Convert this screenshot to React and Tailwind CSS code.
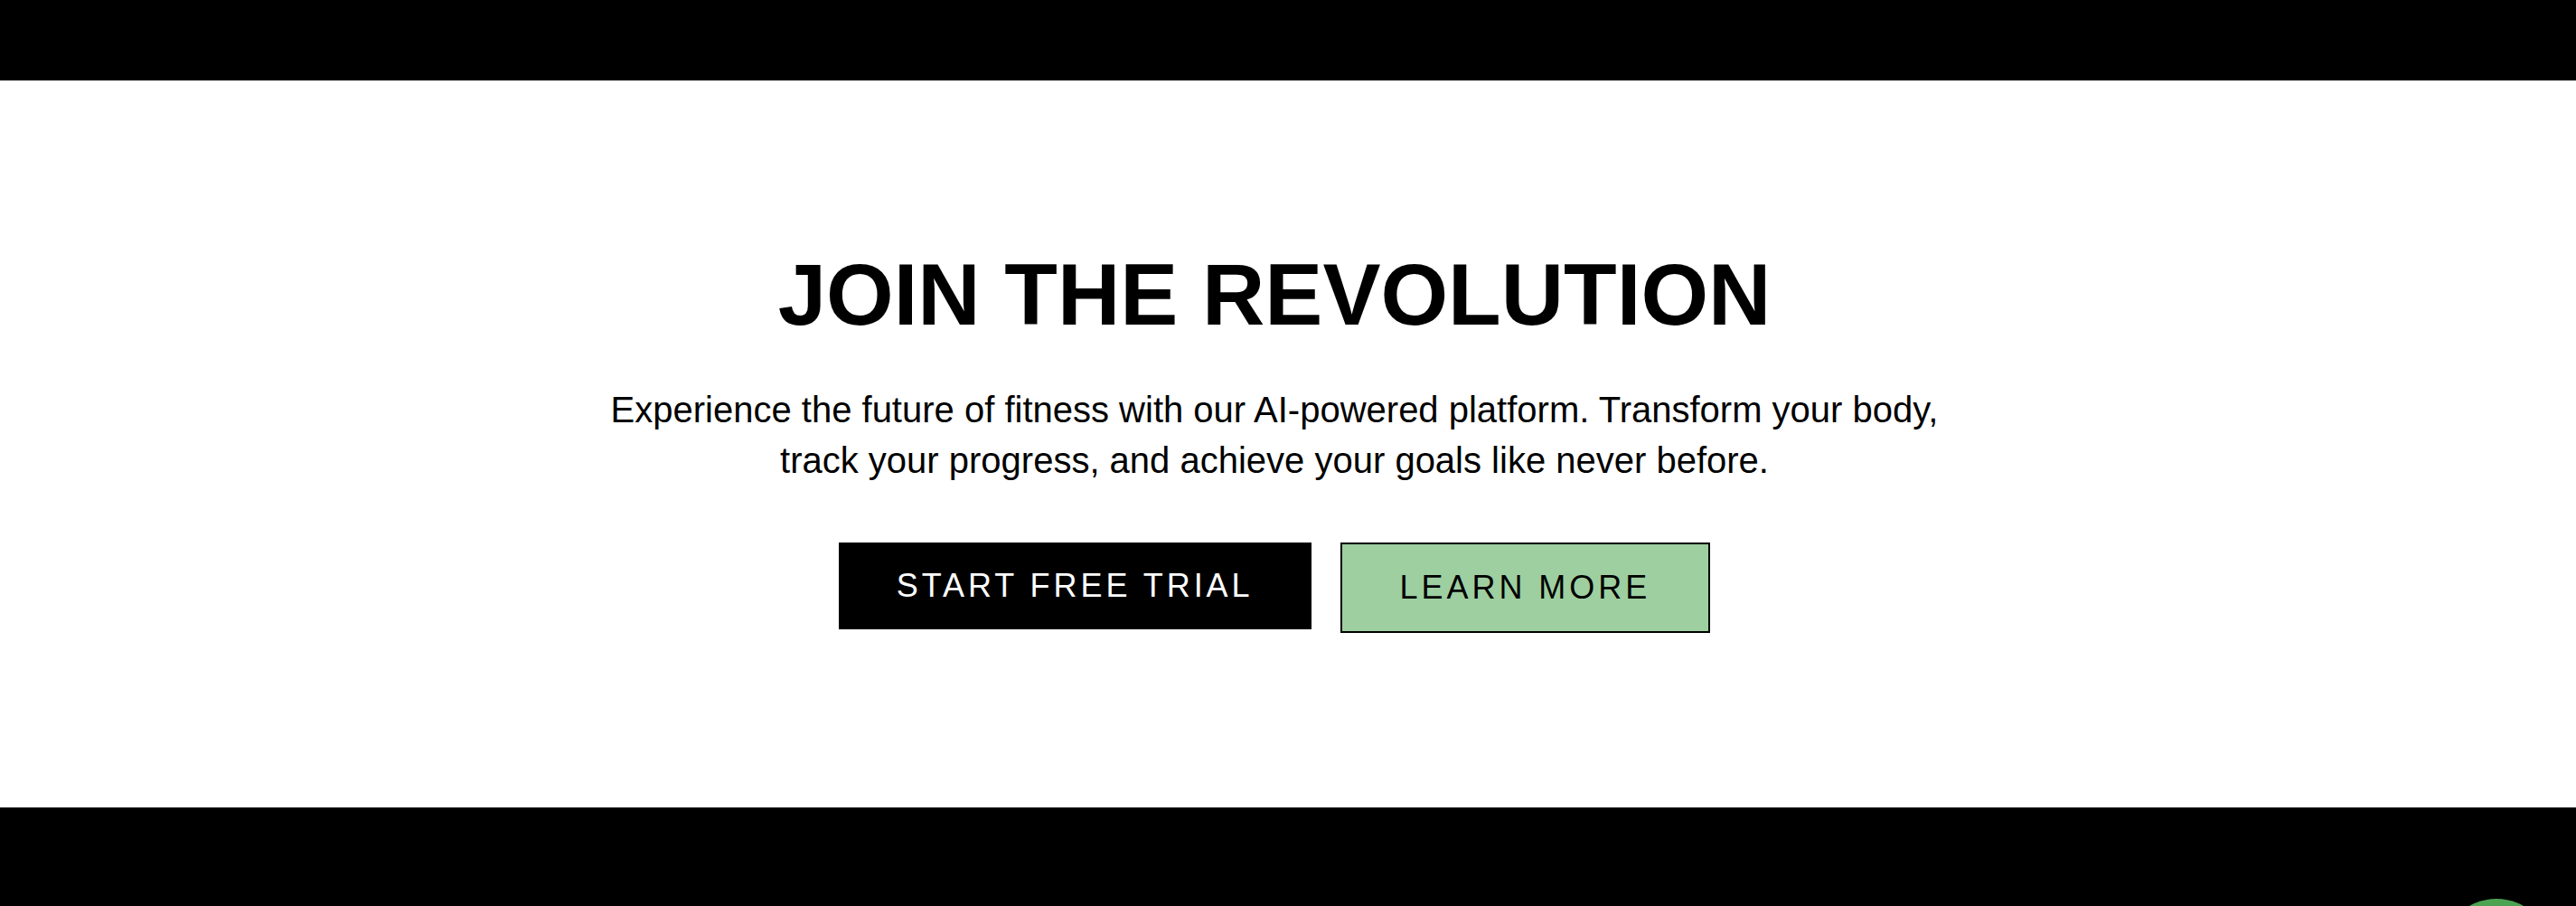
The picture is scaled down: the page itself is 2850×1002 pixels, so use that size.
export default function App() {
  return (
    <div className="w-full h-[1002px] overflow-hidden bg-white font-['Liberation_Sans',Arial,sans-serif] text-black">
      <header className="h-[89px] bg-black" />
      <section className="h-[804px] flex flex-col items-center pt-[189px] pr-[30px]">
        <h1 className="text-[96px] leading-none font-bold">JOIN THE REVOLUTION</h1>
        <p className="mt-[51px] max-w-[1520px] text-center text-[40px] leading-[56px]">
          Experience the future of fitness with our AI-powered platform. Transform your body, track your progress, and achieve your goals like never before.
        </p>
        <div className="mt-[63px] flex items-start gap-[32px]">
          <button className="bg-black text-white text-[36px] leading-[56px] tracking-[0.11em] px-[64px] py-[20px]">
            START FREE TRIAL
          </button>
          <button className="bg-[#9ecfa0] text-black border-2 border-black text-[36px] leading-[56px] tracking-[0.11em] px-[64px] py-[20px]">
            LEARN MORE
          </button>
        </div>
      </section>
      <footer className="relative h-[109px] bg-black overflow-hidden">
        <div className="absolute right-[28px] top-[101px] w-[120px] h-[120px] rounded-full bg-[#4ca352]" />
      </footer>
    </div>
  );
}
